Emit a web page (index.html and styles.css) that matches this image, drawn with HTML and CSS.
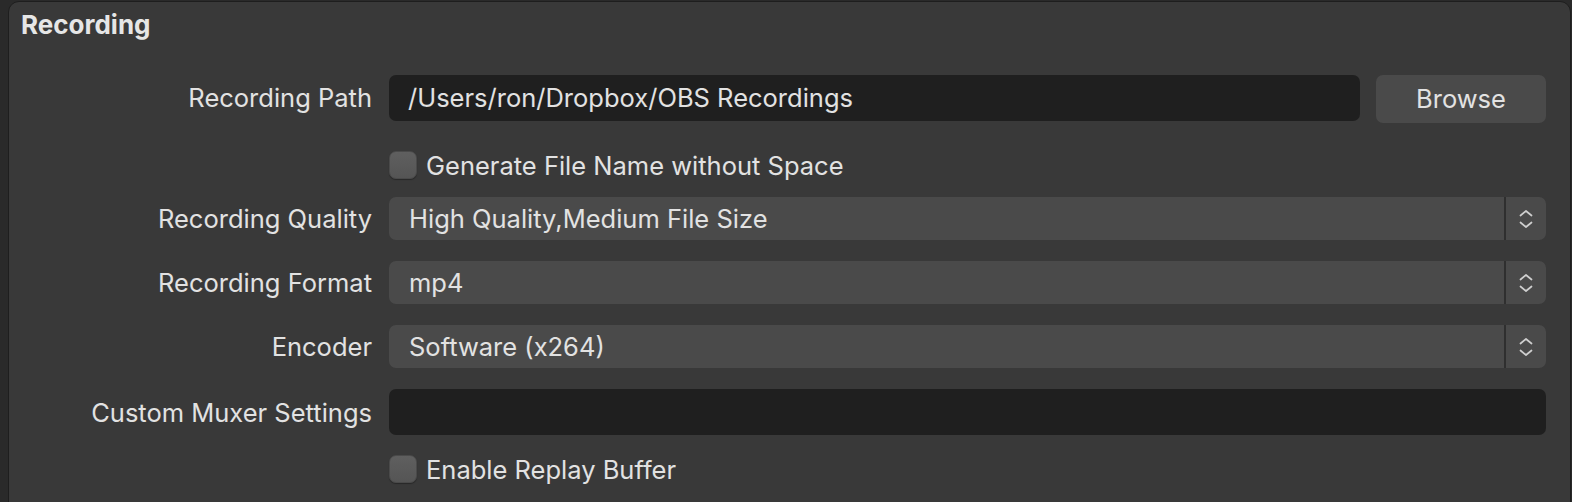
FILE: index.html
```html
<!DOCTYPE html>
<html>
<head>
<meta charset="utf-8">
<link rel="stylesheet" href="styles.css">
</head>
<body>
<div class="panel">
  <div class="title">Recording</div>
  <div class="form">
    <div class="row row-path">
      <div class="label">Recording Path</div>
      <div class="field field-path">
        <div class="input">/Users/ron/Dropbox/OBS Recordings</div>
        <div class="button">Browse</div>
      </div>
    </div>
    <div class="row row-check1">
      <div class="label"></div>
      <div class="field">
        <div class="check"><span class="box"></span><span>Generate File Name without Space</span></div>
      </div>
    </div>
    <div class="row row-sel1">
      <div class="label">Recording Quality</div>
      <div class="field">
        <div class="select"><span class="value">High Quality,Medium File Size</span><span class="arrows"><svg width="14" height="24" viewBox="0 0 14 24"><path d="M1.5 8.5 L7 4 L12.5 8.5 M1.5 15.5 L7 20 L12.5 15.5" fill="none" stroke="#cfcfcf" stroke-width="1.7" stroke-linecap="round" stroke-linejoin="round"/></svg></span></div>
      </div>
    </div>
    <div class="row row-sel">
      <div class="label">Recording Format</div>
      <div class="field">
        <div class="select"><span class="value">mp4</span><span class="arrows"><svg width="14" height="24" viewBox="0 0 14 24"><path d="M1.5 8.5 L7 4 L12.5 8.5 M1.5 15.5 L7 20 L12.5 15.5" fill="none" stroke="#cfcfcf" stroke-width="1.7" stroke-linecap="round" stroke-linejoin="round"/></svg></span></div>
      </div>
    </div>
    <div class="row row-sel">
      <div class="label">Encoder</div>
      <div class="field">
        <div class="select"><span class="value">Software (x264)</span><span class="arrows"><svg width="14" height="24" viewBox="0 0 14 24"><path d="M1.5 8.5 L7 4 L12.5 8.5 M1.5 15.5 L7 20 L12.5 15.5" fill="none" stroke="#cfcfcf" stroke-width="1.7" stroke-linecap="round" stroke-linejoin="round"/></svg></span></div>
      </div>
    </div>
    <div class="row row-mux">
      <div class="label">Custom Muxer Settings</div>
      <div class="field">
        <div class="input input-full"></div>
      </div>
    </div>
    <div class="row row-check2">
      <div class="label"></div>
      <div class="field">
        <div class="check"><span class="box"></span><span>Enable Replay Buffer</span></div>
      </div>
    </div>
  </div>
</div>
</body>
</html>
```
FILE: styles.css
```css
html, body {
  margin: 0;
  padding: 0;
  background: #2a2a2a;
  width: 1572px;
  height: 502px;
  overflow: hidden;
}
body {
  font-family: Inter, "Noto Sans", sans-serif;
  color: #e2e2e2;
}
.panel {
  margin: 1px 1px 0 8px;
  height: 520px;
  box-sizing: border-box;
  background: #393939;
  border: 1px solid #1e1e1e;
  border-radius: 11px;
  padding: 0 24px 0 12px;
}
.title {
  font-weight: 700;
  font-size: 26px;
  line-height: 30px;
  padding-top: 8px;
  color: #e6e6e6;
}
.form {
  display: flex;
  flex-direction: column;
  padding-top: 35px;
}
.row {
  display: flex;
  align-items: center;
}
.label {
  width: 351px;
  margin-right: 17px;
  text-align: right;
  font-size: 25.5px;
  flex: none;
  white-space: nowrap;
}
.field {
  flex: 1;
  display: flex;
  align-items: center;
}
.row-path { height: 48px; align-items: flex-start; }
.row-path .label { line-height: 46px; }
.field-path { align-items: flex-start; gap: 16px; }
.input {
  background: #1f1f1f;
  border-radius: 7px;
  height: 46px;
  line-height: 46px;
  padding-left: 19px;
  font-size: 25.5px;
  flex: 1;
  box-sizing: border-box;
}
.button {
  width: 170px;
  height: 48px;
  line-height: 48px;
  background: #4a4a4a;
  border-radius: 7px;
  text-align: center;
  font-size: 25.5px;
}
.row-check1 { margin-top: 28px; height: 28px; }
.row-check2 { margin-top: 20px; height: 28px; }
.check {
  display: flex;
  align-items: center;
  gap: 9px;
  font-size: 25.5px;
}
.box {
  width: 28px;
  height: 28px;
  box-sizing: border-box;
  border-radius: 7px;
  background: linear-gradient(#5f5f5f, #555555);
  border: 1px solid #4a4a4a;
  box-shadow: 0 1px 1px rgba(0,0,0,0.3);
}
.row-sel1 { margin-top: 18px; height: 43px; }
.row-sel { margin-top: 21px; height: 43px; }
.select {
  flex: 1;
  height: 43px;
  background: #4a4a4a;
  border-radius: 7px;
  display: flex;
  align-items: stretch;
  font-size: 25.5px;
}
.value {
  flex: 1;
  padding-left: 20px;
  line-height: 43px;
  border-right: 2px solid #2f2f2f;
}
.arrows {
  width: 40px;
  display: flex;
  align-items: center;
  justify-content: center;
}
.row-mux { margin-top: 21px; height: 46px; }
.input-full { flex: 1; }
```
